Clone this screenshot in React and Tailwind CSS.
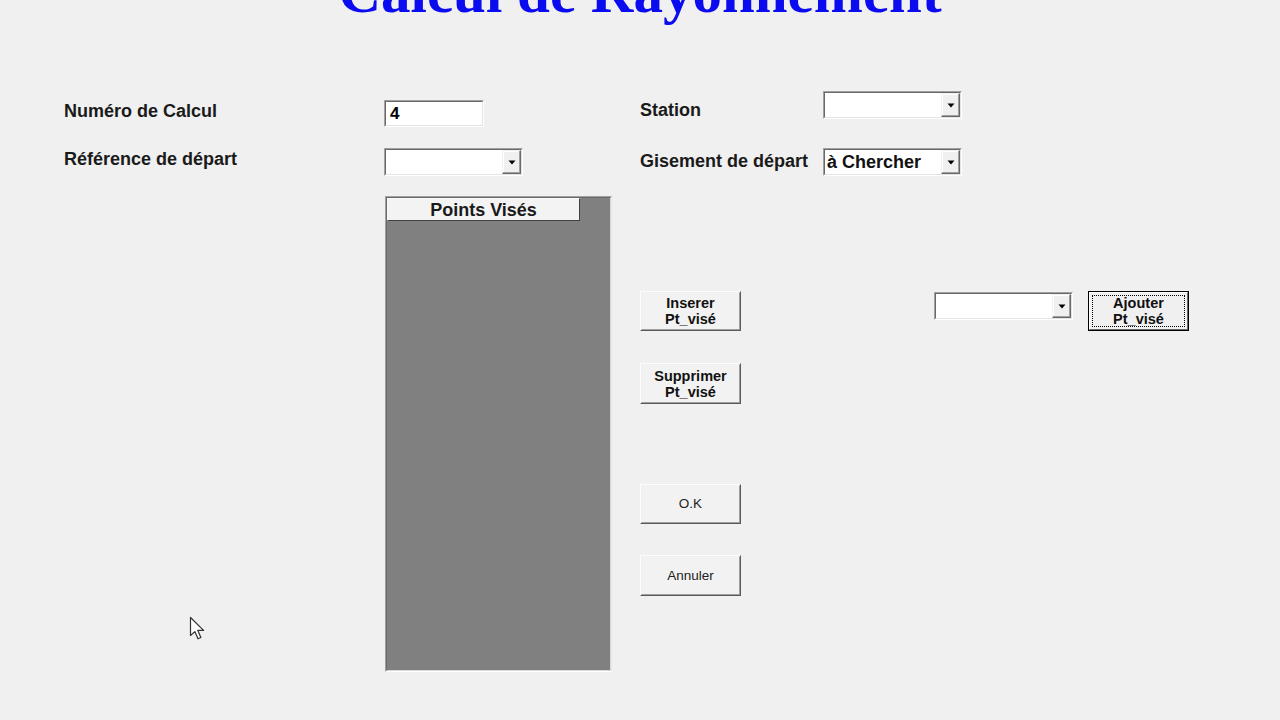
import React from "react";

const SANS = { fontFamily: '"Liberation Sans", Arial, sans-serif' };

function Sunken({ className, children }) {
  return (
    <div className={"border border-t-[#a0a0a0] border-l-[#a0a0a0] border-r-white border-b-white " + className}>
      <div className="flex h-full w-full items-center border border-t-[#696969] border-l-[#696969] border-r-[#e3e3e3] border-b-[#e3e3e3] bg-white">
        {children}
      </div>
    </div>
  );
}

function Arrow() {
  return (
    <div className="flex h-full w-[19px] items-center justify-center border border-t-[#f0f0f0] border-l-[#f0f0f0] border-r-[#696969] border-b-[#696969] bg-[#f0f0f0] shadow-[inset_-1px_-1px_0_#a0a0a0,inset_1px_1px_0_#ffffff]">
      <svg width="8" height="5" viewBox="0 0 8 5">
        <path d="M0.5 0.5 H7.5 L4 4.5 Z" fill="#000" />
      </svg>
    </div>
  );
}

function Combo({ className, text }) {
  return (
    <Sunken className={className}>
      <div className="flex-1 truncate pl-[2px] text-[18px] font-bold leading-[20px] text-[#111]">{text}</div>
      <Arrow />
    </Sunken>
  );
}

function Button({ className, children, textClass, isDefault }) {
  if (isDefault) {
    return (
      <div className={"border border-black " + className}>
        <div className="flex h-full w-full items-center justify-center border border-t-white border-l-white border-r-[#696969] border-b-[#696969] bg-[#f0f0f0] p-[2px]">
          <div className="flex h-full w-full flex-col items-center justify-center border border-dotted border-black">
            <span className={textClass}>{children}</span>
          </div>
        </div>
      </div>
    );
  }
  return (
    <div className={"border border-t-[#fdfdfd] border-l-[#fdfdfd] border-r-[#5a5a5a] border-b-[#5a5a5a] " + className}>
      <div className="flex h-full w-full flex-col items-center justify-center border border-t-[#f0f0f0] border-l-[#f0f0f0] border-r-[#a0a0a0] border-b-[#a0a0a0] bg-[#f2f2f2]">
        <span className={textClass}>{children}</span>
      </div>
    </div>
  );
}

const btnBold = "text-center text-[14.5px] font-bold leading-[16px] text-[#111]";
const btnReg = "text-center text-[13.5px] leading-[16px] text-[#222]";

export default function App() {
  return (
    <div className="relative h-[720px] w-[1280px] overflow-hidden bg-[#f0f0f0]" style={SANS}>
      {/* title */}
      <div className="h-[91px] overflow-hidden">
        <div
          className="-mt-[37px] text-center text-[59px] font-bold leading-[59px] text-[#0b0bf0]"
          style={{ fontFamily: '"Liberation Serif", "Times New Roman", serif' }}
        >
          Calcul de Rayonnement
        </div>
      </div>

      {/* row 1 */}
      <div className="flex h-[57px] items-start">
        <div className="w-[384px] pl-[64px] pt-[10px] text-[18px] font-bold leading-[20px] text-[#1a1a1a]">Numéro de Calcul</div>
        <Sunken className="mt-[9px] h-[27px] w-[100px]">
          <span className="pl-[4px] text-[17px] font-bold leading-[20px] text-black">4</span>
        </Sunken>
        <div className="ml-[156px] w-[183px] pt-[9px] text-[18px] font-bold leading-[20px] text-[#1a1a1a]">Station</div>
        <Combo className="h-[28px] w-[139px]" text="" />
      </div>

      {/* row 2 */}
      <div className="flex h-[48px] items-start">
        <div className="w-[384px] pl-[64px] pt-[1px] text-[18px] font-bold leading-[20px] text-[#1a1a1a]">Référence de départ</div>
        <Combo className="h-[28px] w-[139px]" text="" />
        <div className="ml-[117px] w-[183px] pt-[3px] text-[18px] font-bold leading-[20px] text-[#1a1a1a]">Gisement de départ</div>
        <Combo className="h-[28px] w-[139px]" text="à Chercher" />
      </div>

      {/* main area */}
      <div className="flex items-start">
        <div className="ml-[385px] h-[476px] w-[227px] border border-t-[#a0a0a0] border-l-[#a0a0a0] border-r-[#e8e8e8] border-b-white">
          <div className="h-full w-full border border-t-[#696969] border-l-[#696969] border-r-[#d8d8d8] border-b-[#d8d8d8] bg-[#808080]">
            <div className="flex h-[23px] w-[193px] items-center justify-center border border-t-[#f8f8f8] border-l-[#f8f8f8] border-r-[#404040] border-b-[#404040] bg-[#f3f3f3] text-[18px] font-bold leading-[20px] text-[#1a1a1a]">
              Points Visés
            </div>
          </div>
        </div>

        <div className="ml-[28px] flex flex-col pt-[95px]">
          <Button className="h-[40px] w-[101px]" textClass={btnBold}>
            Inserer<br />Pt_visé
          </Button>
          <Button className="mt-[32px] h-[41px] w-[101px]" textClass={btnBold}>
            Supprimer<br />Pt_visé
          </Button>
          <Button className="mt-[80px] h-[40px] w-[101px]" textClass={btnReg}>
            O.K
          </Button>
          <Button className="mt-[31px] h-[41px] w-[101px]" textClass={btnReg}>
            Annuler
          </Button>
        </div>

        <Combo className="ml-[193px] mt-[96px] h-[28px] w-[139px]" text="" />

        <Button className="ml-[15px] mt-[95px] h-[40px] w-[101px]" textClass={btnBold} isDefault>
          Ajouter<br />Pt_visé
        </Button>
      </div>

      {/* mouse cursor */}
      <svg className="absolute left-[189px] top-[616px]" width="18" height="26" viewBox="0 0 18 26">
        <path
          d="M1.5 1.5 L1.5 19.5 L5.8 15.6 L9 22.8 L11.9 21.5 L8.8 14.4 L14.6 14.4 Z"
          fill="#fff"
          stroke="#333"
          strokeWidth="1.2"
          strokeLinejoin="round"
        />
      </svg>
    </div>
  );
}
